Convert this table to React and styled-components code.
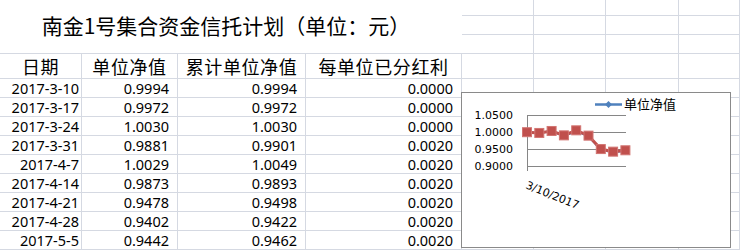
import React from "react";
import styled, { createGlobalStyle } from "styled-components";

const Global = createGlobalStyle`
  html, body { margin: 0; padding: 0; background: #fff; overflow: hidden; }
  * { box-sizing: border-box; }
`;

const GRID = "#d5d9e2";

const Sheet = styled.div`
  position: relative;
  width: 740px;
  height: 250px;
  display: grid;
  grid-template-columns: 82px 96px 128px 156px 72px 72px 73px 1fr;
  grid-template-rows: 16px 19px 19px 25px repeat(9, 19px);
  background: #fff;
  overflow: hidden;
`;

const Cell = styled.div`
  border-right: 1px solid ${GRID};
  border-bottom: 1px solid ${GRID};
  display: flex;
  align-items: center;
  justify-content: ${(p) => (p.$align === "center" ? "center" : "flex-end")};
  padding-right: ${(p) => p.$pad || 0}px;
  font-family: "Noto Sans", "DejaVu Sans", sans-serif;
  font-size: 14.5px;
  line-height: 1;
  color: #000;
  white-space: nowrap;
  overflow: visible;
`;

const TitleCell = styled.div`
  grid-column: 1 / 5;
  grid-row: 1 / 4;
  border-bottom: 1px solid ${GRID};
  display: flex;
  align-items: center;
  justify-content: center;
  padding: 0 10px 4px 0;
  font-family: "Noto Sans CJK SC", sans-serif;
  font-size: 21px;
  color: #000;
  white-space: nowrap;
`;

const HeadCell = styled(Cell)`
  justify-content: center;
  padding: 0 0 1px 0;
  font-family: "Noto Sans CJK SC", sans-serif;
  font-size: 18px;
  letter-spacing: 0.6px;
`;

const ChartBox = styled.div`
  position: absolute;
  left: 461px;
  top: 92px;
  width: 270px;
  height: 156px;
  background: #fff;
  border: 1px solid #8a8a8a;
`;

const ChartSvg = styled.svg`
  display: block;
  position: absolute;
  left: -1px;
  top: -1px;
  overflow: visible;
`;

const rows = [
  ["2017-3-10", "0.9994", "0.9994", "0.0000"],
  ["2017-3-17", "0.9972", "0.9972", "0.0000"],
  ["2017-3-24", "1.0030", "1.0030", "0.0000"],
  ["2017-3-31", "0.9881", "0.9901", "0.0020"],
  ["2017-4-7", "1.0029", "1.0049", "0.0020"],
  ["2017-4-14", "0.9873", "0.9893", "0.0020"],
  ["2017-4-21", "0.9478", "0.9498", "0.0020"],
  ["2017-4-28", "0.9402", "0.9422", "0.0020"],
  ["2017-5-5", "0.9442", "0.9462", "0.0020"],
];

const headers = ["日期", "单位净值", "累计单位净值", "每单位已分红利"];

function Chart() {
  const x0 = 66;
  const step = 12.3;
  const yOf = (v) => 40 + (1 - v) * 340;
  const blue = rows.map((r, i) => [x0 + i * step, yOf(parseFloat(r[1]))]);
  const red = rows.map((r, i) => [x0 + i * step, yOf(parseFloat(r[2]))]);
  const pts = (arr) => arr.map((p) => p.join(",")).join(" ");
  const ticks = [
    ["1.0500", 23],
    ["1.0000", 40],
    ["0.9500", 57],
    ["0.9000", 74],
  ];
  return (
    <ChartBox>
      <ChartSvg width="270" height="156" viewBox="0 0 270 156">
        {ticks.map(([t, y]) => (
          <g key={t}>
            <line x1={x0} x2={165} y1={y + 0.5} y2={y + 0.5} stroke="#868686" strokeWidth="1" />
            <text
              x={52}
              y={y + 4}
              textAnchor="end"
              fontFamily="DejaVu Sans, sans-serif"
              fontSize="11"
              fill="#000"
            >
              {t}
            </text>
          </g>
        ))}
        <line x1={x0 + 0.5} x2={x0 + 0.5} y1={23} y2={79} stroke="#868686" strokeWidth="1" />
        <polyline points={pts(blue)} fill="none" stroke="#4f81bd" strokeWidth="2" />
        {blue.map(([x, y], i) => (
          <rect key={i} x={x - 2.5} y={y - 2.5} width="5" height="5" fill="#4f81bd" transform={`rotate(45 ${x} ${y})`} />
        ))}
        <polyline points={pts(red)} fill="none" stroke="#c0504d" strokeWidth="3" />
        {red.map(([x, y], i) => (
          <rect key={i} x={x - 4.5} y={y - 4.5} width="9" height="9" fill="#c0504d" stroke="#d27572" strokeWidth="1" />
        ))}
        <text
          x={64}
          y={96}
          fontFamily="DejaVu Sans, sans-serif"
          fontSize="11"
          fill="#000"
          transform="rotate(22 64 96)"
        >
          3/10/2017
        </text>
        <line x1={134} x2={161} y1={12.5} y2={12.5} stroke="#4f81bd" strokeWidth="2.5" />
        <rect x={145} y={10} width="5" height="5" fill="#4f81bd" transform="rotate(45 147.5 12.5)" />
        <text x={163} y={17} fontFamily="Noto Sans CJK SC, sans-serif" fontSize="13" fill="#000">
          单位净值
        </text>
      </ChartSvg>
    </ChartBox>
  );
}

export default function App() {
  return (
    <>
      <Global />
      <Sheet>
        <TitleCell>南金1号集合资金信托计划（单位：元）</TitleCell>
        {[0, 1, 2].map((r) =>
          [0, 1, 2, 3].map((c) => <Cell key={`t${r}${c}`} />)
        )}
        {headers.map((h) => (
          <HeadCell key={h}>{h}</HeadCell>
        ))}
        {[0, 1, 2, 3].map((c) => <Cell key={`h${c}`} />)}
        {rows.map((r) => (
          <React.Fragment key={r[0]}>
            <Cell $pad={2}>{r[0]}</Cell>
            <Cell $pad={8}>{r[1]}</Cell>
            <Cell $pad={8}>{r[2]}</Cell>
            <Cell $pad={8}>{r[3]}</Cell>
            {[0, 1, 2, 3].map((c) => <Cell key={c} />)}
          </React.Fragment>
        ))}
        <Chart />
      </Sheet>
    </>
  );
}
